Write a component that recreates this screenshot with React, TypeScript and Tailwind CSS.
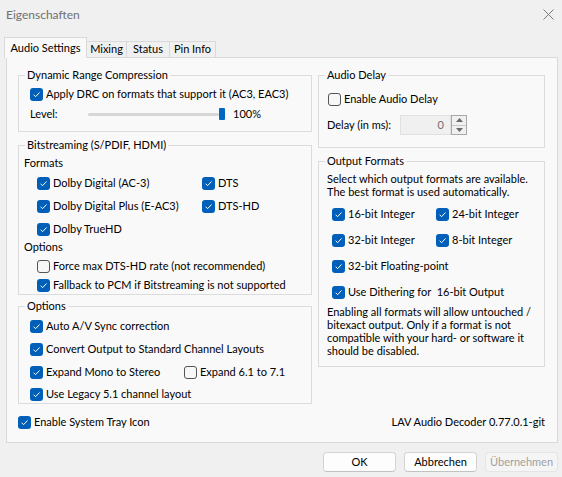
import React from 'react';
import clsx from 'clsx';

type CheckProps = { on?: boolean };

function Check({ on }: CheckProps): JSX.Element {
    if (!on) {
        return <span className="w-[13px] h-[13px] shrink-0 rounded-[3px] border border-[#555] bg-[#f7f7f7]" />;
    }
    return (
        <span className="w-[13px] h-[13px] shrink-0 rounded-[3px] bg-[#005fb8] flex items-center justify-center">
            <svg width="9" height="9" viewBox="0 0 9 9">
                <path d="M1.6 4.7 L3.6 6.7 L7.5 2.5" fill="none" stroke="#fff" strokeWidth="1" />
            </svg>
        </span>
    );
}

type RowProps = { on?: boolean; label: string; className?: string };

function CheckRow({ on, label, className }: RowProps): JSX.Element {
    return (
        <div className={clsx('flex items-center h-[14px] gap-[3px] whitespace-nowrap', className)}>
            <Check on={on} />
            <span>{label}</span>
        </div>
    );
}

type GroupProps = { title: string; className?: string; children: React.ReactNode };

function Group({ title, className, children }: GroupProps): JSX.Element {
    return (
        <fieldset className={clsx('border border-[#dcdcdc] min-w-0', className)}>
            <legend className="ml-[6px] px-[2px] leading-[14px]">{title}</legend>
            {children}
        </fieldset>
    );
}

function Button({ label, disabled }: { label: string; disabled?: boolean }): JSX.Element {
    return (
        <div
            className={clsx(
                'w-[73px] h-[20px] rounded-[4px] border flex items-center justify-center',
                disabled
                    ? 'bg-[#f5f5f5] border-[#e5e5e5] text-[#a0a0a0]'
                    : 'bg-[#fdfdfd] border-[#d3d3d3] border-b-[#c2c2c2]'
            )}
        >
            {label}
        </div>
    );
}

export default function App(): JSX.Element {
    return (
        <div className="w-[562px] h-[477px] bg-[#f0f0f0] text-[11px] text-black font-['Lato',sans-serif] flex flex-col overflow-hidden">
            {/* title bar */}
            <div className="h-[29px] flex items-center justify-between pl-[6px] pr-[8px]">
                <span className="text-[12px] text-[#6f6f6f]">Eigenschaften</span>
                <svg width="11" height="11" viewBox="0 0 11 11">
                    <path d="M0.5 0.5 L10.5 10.5 M10.5 0.5 L0.5 10.5" stroke="#7a7a7a" strokeWidth="1" />
                </svg>
            </div>

            {/* tabs */}
            <div className="mt-[8px] pl-[4px] flex items-end h-[20px] relative z-10">
                <div className="w-[83px] h-[21px] mb-[-1px] border border-b-0 border-[#d9d9d9] bg-[#f9f9f9] flex items-center justify-center">
                    Audio Settings
                </div>
                <div className="w-[40px] h-[16px] border border-l-0 border-b-0 border-[#d9d9d9] flex items-center justify-center">Mixing</div>
                <div className="w-[43px] h-[16px] border border-l-0 border-b-0 border-[#d9d9d9] flex items-center justify-center">Status</div>
                <div className="w-[46px] h-[16px] border border-l-0 border-b-0 border-[#d9d9d9] flex items-center justify-center">Pin Info</div>
            </div>

            {/* tab page */}
            <div className="ml-[6px] w-[552px] h-[386px] border border-[#d9d9d9] bg-[#f9f9f9] pt-[10px] pl-[11px] pr-[11px] flex flex-col">
                <div className="flex items-start gap-[6px]">
                    {/* left column */}
                    <div className="w-[294px] flex flex-col">
                        <Group title="Dynamic Range Compression" className="pb-[10px]">
                            <div className="pl-[11px]">
                                <CheckRow on label="Apply DRC on formats that support it (AC3, EAC3)" className="mt-[5px]" />
                                <div className="mt-[6px] flex items-center h-[14px]">
                                    <span className="w-[58px]">Level:</span>
                                    <span className="w-[131px] h-[3px] rounded-full bg-[#d6d6d6]" />
                                    <span className="w-[6px] h-[12px] rounded-[1px] bg-[#0067c0]" />
                                    <span className="ml-[8px]">100%</span>
                                </div>
                            </div>
                        </Group>

                        <Group title="Bitstreaming (S/PDIF, HDMI)" className="mt-[6px] pb-[2px]">
                            <div className="pl-[5px]">
                                <div className="mt-[4px] h-[14px] leading-[14px]">Formats</div>
                                <div className="pl-[13px] mt-[6px] grid grid-cols-[165px_auto] gap-y-[9px]">
                                    <CheckRow on label="Dolby Digital (AC-3)" />
                                    <CheckRow on label="DTS" />
                                    <CheckRow on label="Dolby Digital Plus (E-AC3)" />
                                    <CheckRow on label="DTS-HD" />
                                    <CheckRow on label="Dolby TrueHD" />
                                </div>
                                <div className="mt-[4px] h-[14px] leading-[14px]">Options</div>
                                <div className="pl-[13px]">
                                    <CheckRow label="Force max DTS-HD rate (not recommended)" className="mt-[5px]" />
                                    <CheckRow on label="Fallback to PCM if Bitstreaming is not supported" className="mt-[5px]" />
                                </div>
                            </div>
                        </Group>

                        <Group title="Options" className="mt-[4px] pb-[2px]">
                            <div className="pl-[11px]">
                                <CheckRow on label="Auto A/V Sync correction" className="mt-[6px]" />
                                <CheckRow on label="Convert Output to Standard Channel Layouts" className="mt-[9px]" />
                                <div className="mt-[9px] flex">
                                    <CheckRow on label="Expand Mono to Stereo" className="w-[154px]" />
                                    <CheckRow label="Expand 6.1 to 7.1" />
                                </div>
                                <CheckRow on label="Use Legacy 5.1 channel layout" className="mt-[8px]" />
                            </div>
                        </Group>
                    </div>

                    {/* right column */}
                    <div className="w-[227px] flex flex-col">
                        <Group title="Audio Delay" className="pb-[12px]">
                            <CheckRow label="Enable Audio Delay" className="mt-[10px] ml-[9px]" />
                            <div className="mt-[9px] ml-[8px] flex items-center h-[20px]">
                                <span className="w-[73px]">Delay (in ms):</span>
                                <div className="w-[51px] h-[20px] border border-[#e0e0e0] bg-[#f0f0f0] flex items-center justify-end pr-[6px] text-[#6d6d6d]">
                                    0
                                </div>
                                <div className="w-[16px] h-[20px] border border-[#a8a8a8] flex flex-col bg-[#f0f0f0]">
                                    <div className="flex-1 flex items-center justify-center border-b border-[#c8c8c8]">
                                        <svg width="7" height="4" viewBox="0 0 7 4"><path d="M0 4 L3.5 0 L7 4 Z" fill="#6a6a6a" /></svg>
                                    </div>
                                    <div className="flex-1 flex items-center justify-center">
                                        <svg width="7" height="4" viewBox="0 0 7 4"><path d="M0 0 L3.5 4 L7 0 Z" fill="#6a6a6a" /></svg>
                                    </div>
                                </div>
                            </div>
                        </Group>

                        <Group title="Output Formats" className="mt-[6px] pb-[9px]">
                            <div className="pl-[8px] pt-[4px] leading-[13px]">
                                <p>Select which output formats are available.</p>
                                <p>The best format is used automatically.</p>
                            </div>
                            <div className="pl-[13px] mt-[9px] grid grid-cols-[104px_auto] gap-y-[12px]">
                                <CheckRow on label="16-bit Integer" />
                                <CheckRow on label="24-bit Integer" />
                                <CheckRow on label="32-bit Integer" />
                                <CheckRow on label="8-bit Integer" />
                                <CheckRow on label="32-bit Floating-point" className="col-span-2" />
                                <CheckRow on label="Use Dithering for  16-bit Output" className="col-span-2 whitespace-pre" />
                            </div>
                            <p className="pl-[8px] pr-[8px] mt-[6px] leading-[13px]">
                                Enabling all formats will allow untouched / bitexact output. Only if a format is not
                                compatible with your hard- or software it should be disabled.
                            </p>
                        </Group>
                    </div>
                </div>

                {/* footer row inside page */}
                <div className="mt-[11px] flex items-center justify-between h-[14px] pr-[1px]">
                    <CheckRow on label="Enable System Tray Icon" />
                    <span>LAV Audio Decoder 0.77.0.1-git</span>
                </div>
            </div>

            {/* dialog buttons */}
            <div className="mt-[9px] pr-[4px] flex justify-end gap-[8px]">
                <Button label="OK" />
                <Button label="Abbrechen" />
                <Button label="Übernehmen" disabled />
            </div>
        </div>
    );
}
